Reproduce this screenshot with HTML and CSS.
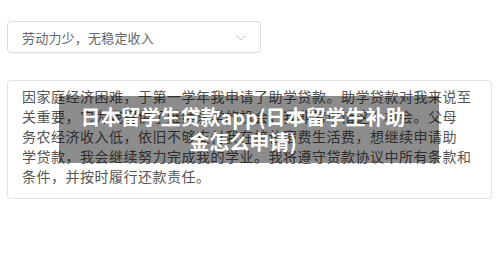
FILE: index.html
```html
<!DOCTYPE html>
<html lang="zh-CN">
  <head>
    <meta charset="UTF-8" />
    <meta name="viewport" content="width=device-width, initial-scale=1.0" />
    <title>日本留学生贷款app</title>
    <link rel="stylesheet" href="styles.css">
  </head>
  <body>
    <div class="page">
      <div class="select">
        <span>劳动力少，无稳定收入</span>
        <svg class="chevron" width="10" height="6" viewBox="0 0 10 6">
          <path d="M0.5 0.5 L5 5 L9.5 0.5" fill="none" stroke="#c4c4c4" stroke-width="1" />
        </svg>
      </div>

      <div class="reason">
        <p>因家庭经济困难，于第一学年我申请了助学贷款。助学贷款对我来说至<br>关重要，它为我提供了继续求学的机会，我非常珍惜这个机会。父母<br>务农经济收入低，依旧不够支付我在校住宿费生活费，想继续申请助<br>学贷款，我会继续努力完成我的学业。我将遵守贷款协议中所有条款和<br>条件，并按时履行还款责任。</p>
        <div class="banner">日本留学生贷款app(日本留学生补助<br>金怎么申请)</div>
      </div>
    </div>
  </body>
</html>
```

FILE: styles.css
```css
body {
  margin: 0;
  padding: 0;
  background: #fff;
  font-family: "Noto Sans CJK SC", "Liberation Sans", sans-serif;
}

.page {
  padding: 21px 8px 0 7px;
}

.select {
  width: 254px;
  height: 32px;
  box-sizing: border-box;
  border: 1px solid #dcdcdc;
  border-radius: 4px;
  display: flex;
  align-items: center;
  justify-content: space-between;
  padding: 0 14px 0 14px;
  font-size: 13px;
  letter-spacing: 0.2px;
  color: #666;
}

.chevron {
  margin-top: 1px;
}

.reason {
  position: relative;
  margin-top: 27px;
  width: 485px;
  height: 119px;
  box-sizing: border-box;
  border: 1px solid #e3e3e3;
  border-radius: 4px;
  box-shadow: 0 1px 2px rgba(0, 0, 0, 0.06);
  padding: 5px 6px 0 14px;
}

.reason p {
  margin: 0;
  white-space: nowrap;
  font-size: 14px;
  letter-spacing: 0.5px;
  line-height: 20px;
  color: #555;
}

.banner {
  position: absolute;
  left: 51px;
  top: 15px;
  width: 380px;
  height: 67px;
  box-sizing: border-box;
  padding: 8px 12px 0 0;
  background: rgba(0, 0, 0, 0.45);
  color: #fff;
  font-size: 20px;
  font-weight: bold;
  line-height: 25px;
  text-align: center;
}
```
